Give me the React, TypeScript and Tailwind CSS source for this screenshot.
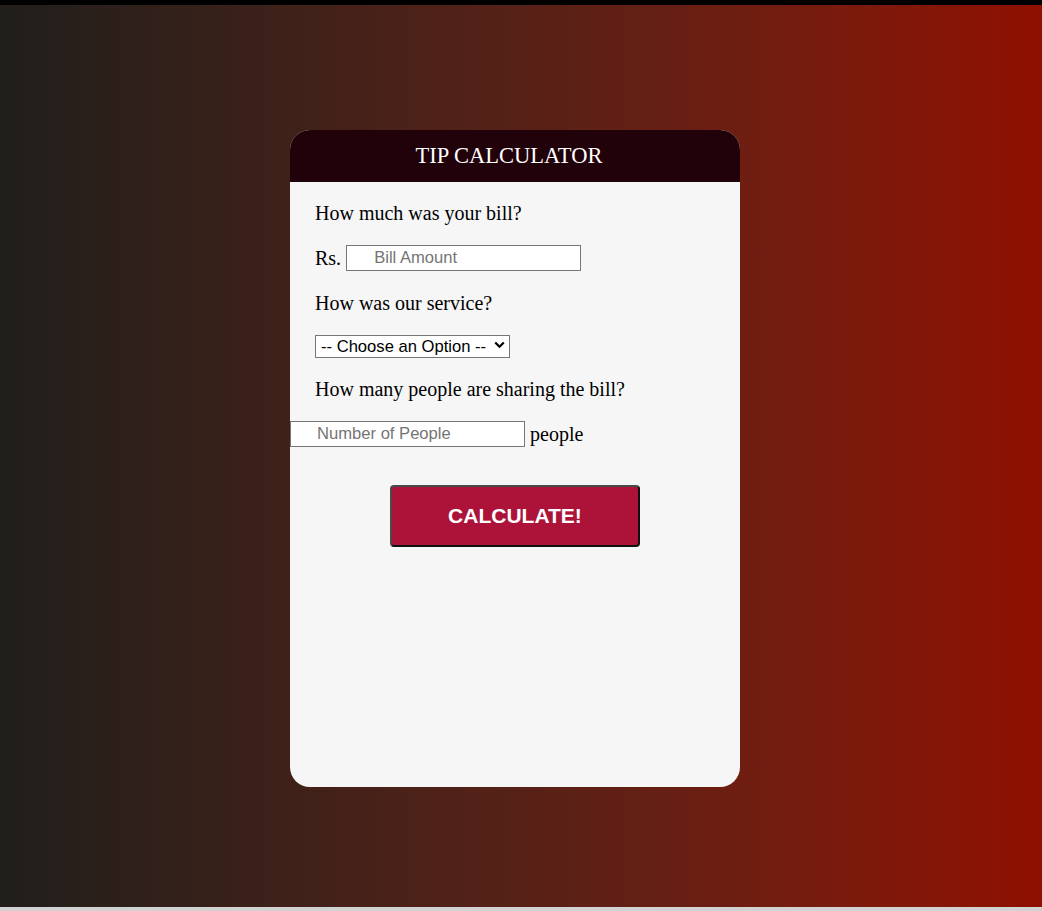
export default function App() {
  return (
    <div className="h-[911px] flex flex-col overflow-hidden" style={{ fontFamily: '"Liberation Serif", "Times New Roman", serif' }}>
      <div className="h-[5px] bg-black" />
      <div className="h-[902px] bg-gradient-to-r from-[#201e1b] to-[#8f0f00] pt-[125px]">
        <div className="ml-[290px] w-[450px] h-[657px] rounded-[20px] bg-[#f6f6f6] overflow-hidden">
          <div className="h-[52px] bg-[#22020a] text-white text-center text-[22.5px] leading-[52px] pr-[12px]">TIP CALCULATOR</div>
          <div className="pt-[20px] text-[20px] text-black leading-[22px]">
            <p className="pl-[25px]">How much was your bill?</p>
            <div className="pl-[25px] mt-[21px] flex items-center">
              <span>Rs.</span>
              <input
                placeholder="Bill Amount"
                className="ml-[5px] w-[235px] h-[26px] border border-[#767676] bg-white pl-[27px] text-[16.6px] placeholder:text-[#757575] outline-none"
                style={{ fontFamily: '"Liberation Sans", Arial, sans-serif' }}
              />
            </div>
            <p className="pl-[25px] mt-[21px]">How was our service?</p>
            <div className="pl-[25px] mt-[20px]">
              <div className="relative w-[195px] h-[23px]">
                <select
                  className="appearance-none w-full h-full border border-[#767676] bg-white pl-[5px] text-[16.6px] text-black outline-none"
                  style={{ fontFamily: '"Liberation Sans", Arial, sans-serif' }}
                  defaultValue=""
                >
                  <option value="">-- Choose an Option --</option>
                </select>
                <svg className="absolute right-[5px] top-[7px] pointer-events-none" width="11" height="8" viewBox="0 0 11 8">
                  <path d="M1.2 1.5 L5.5 5.8 L9.8 1.5" fill="none" stroke="#000" strokeWidth="2.2" />
                </svg>
              </div>
            </div>
            <p className="pl-[25px] mt-[21px]">How many people are sharing the bill?</p>
            <div className="mt-[21px] flex items-center">
              <input
                placeholder="Number of People"
                className="w-[235px] h-[26px] border border-[#767676] bg-white pl-[26px] text-[16.6px] placeholder:text-[#757575] outline-none"
                style={{ fontFamily: '"Liberation Sans", Arial, sans-serif' }}
              />
              <span className="ml-[5px]">people</span>
            </div>
            <div className="mt-[38px] pl-[100px]">
              <button
                className="w-[250px] h-[62px] rounded-[4px] border-2 border-t-[#4a4a4a] border-l-[#4a4a4a] border-r-[#111] border-b-[#111] bg-[#ad1338] text-white text-[21px] font-bold"
                style={{ fontFamily: '"Liberation Sans", Arial, sans-serif' }}
              >
                CALCULATE!
              </button>
            </div>
          </div>
        </div>
      </div>
      <div className="h-[4px] bg-[#d2d2d2]" />
    </div>
  );
}
